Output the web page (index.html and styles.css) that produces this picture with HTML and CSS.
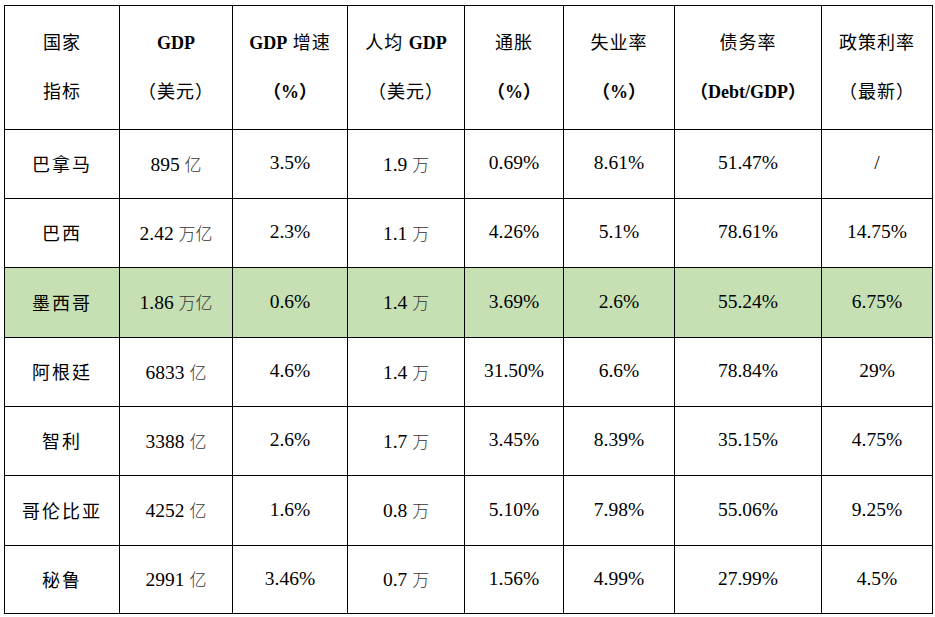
FILE: index.html
```html
<!DOCTYPE html>
<html lang="zh-CN">
<head>
<meta charset="utf-8">
<title>拉美主要国家经济指标</title>
<link rel="stylesheet" href="styles.css">
</head>
<body>
<table class="eco">
  <colgroup>
    <col class="c1"><col class="c2"><col class="c3"><col class="c4">
    <col class="c5"><col class="c6"><col class="c7"><col class="c8">
  </colgroup>
  <thead>
    <tr class="head">
      <th><span class="l">国家</span><span class="l">指标</span></th>
      <th><span class="l b">GDP</span><span class="l">（美元）</span></th>
      <th><span class="l"><b>GDP</b> 增速</span><span class="l b">（%）</span></th>
      <th><span class="l">人均 <b>GDP</b></span><span class="l">（美元）</span></th>
      <th><span class="l">通胀</span><span class="l b">（%）</span></th>
      <th><span class="l">失业率</span><span class="l b">（%）</span></th>
      <th><span class="l">债务率</span><span class="l b">（Debt/GDP）</span></th>
      <th><span class="l">政策利率</span><span class="l">（最新）</span></th>
    </tr>
  </thead>
  <tbody>
    <tr class="r69">
      <td class="cn">巴拿马</td><td>895 <span class="u">亿</span></td><td>3.5%</td><td>1.9 <span class="u">万</span></td><td>0.69%</td><td>8.61%</td><td>51.47%</td><td>/</td>
    </tr>
    <tr class="r69">
      <td class="cn">巴西</td><td>2.42 <span class="u">万亿</span></td><td>2.3%</td><td>1.1 <span class="u">万</span></td><td>4.26%</td><td>5.1%</td><td>78.61%</td><td>14.75%</td>
    </tr>
    <tr class="r70 hl">
      <td class="cn">墨西哥</td><td>1.86 <span class="u">万亿</span></td><td>0.6%</td><td>1.4 <span class="u">万</span></td><td>3.69%</td><td>2.6%</td><td>55.24%</td><td>6.75%</td>
    </tr>
    <tr class="r69">
      <td class="cn">阿根廷</td><td>6833 <span class="u">亿</span></td><td>4.6%</td><td>1.4 <span class="u">万</span></td><td>31.50%</td><td>6.6%</td><td>78.84%</td><td>29%</td>
    </tr>
    <tr class="r69">
      <td class="cn">智利</td><td>3388 <span class="u">亿</span></td><td>2.6%</td><td>1.7 <span class="u">万</span></td><td>3.45%</td><td>8.39%</td><td>35.15%</td><td>4.75%</td>
    </tr>
    <tr class="r70">
      <td class="cn">哥伦比亚</td><td>4252 <span class="u">亿</span></td><td>1.6%</td><td>0.8 <span class="u">万</span></td><td>5.10%</td><td>7.98%</td><td>55.06%</td><td>9.25%</td>
    </tr>
    <tr class="r68">
      <td class="cn">秘鲁</td><td>2991 <span class="u">亿</span></td><td>3.46%</td><td>0.7 <span class="u">万</span></td><td>1.56%</td><td>4.99%</td><td>27.99%</td><td>4.5%</td>
    </tr>
  </tbody>
</table>
</body>
</html>
```
FILE: styles.css
```css
html, body {
  margin: 0;
  padding: 0;
  background: #ffffff;
}
body {
  padding: 5px 0 0 4px;
  font-family: "Liberation Serif", "Noto Sans CJK SC", serif;
  color: #000;
}
.eco {
  border-collapse: collapse;
  table-layout: fixed;
  width: 929px;
  font-size: 19.5px;
}
.c1 { width: 115px; }
.c2 { width: 113px; }
.c3 { width: 115px; }
.c4 { width: 117px; }
.c5 { width: 99px; }
.c6 { width: 111px; }
.c7 { width: 147px; }
.c8 { width: 111px; }
.eco th, .eco td {
  border: 1px solid #000;
  text-align: center;
  vertical-align: middle;
  padding: 0;
}
.eco td { padding-bottom: 2px; }
.head { height: 124px; }
.eco th { font-weight: normal; }
.l {
  display: block;
  line-height: 49px;
  font-size: 18px;
  letter-spacing: 1px;
}
.b, .eco th b { font-weight: bold; letter-spacing: 0; }
.l.b { letter-spacing: 0; }
.r69 { height: 69px; }
.r70 { height: 70px; }
.r68 { height: 68px; }
.cn {
  font-size: 18px;
  letter-spacing: 2px;
}
.u {
  font-size: 17px;
  color: #333;
  font-weight: 300;
}
.hl td { background: #c6e0b4; }
```
